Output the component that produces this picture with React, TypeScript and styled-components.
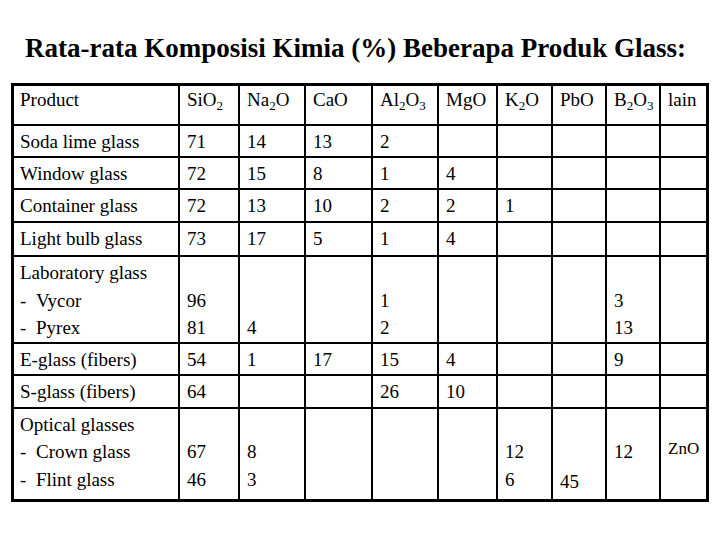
import React from 'react';
import styled, { createGlobalStyle } from 'styled-components';

const GlobalStyle = createGlobalStyle`
  html, body {
    margin: 0;
    padding: 0;
    background: #ffffff;
  }
  body {
    font-family: "Liberation Serif", "Times New Roman", serif;
    color: #000000;
  }
`;

const Page = styled.div`
  width: 720px;
  height: 540px;
  padding: 0 11px;
  box-sizing: border-box;
`;

const Title = styled.h1`
  margin: 0;
  height: 83px;
  padding: 33px 0 0 14px;
  box-sizing: border-box;
  font-size: 27px;
  font-weight: bold;
  line-height: 31px;
  white-space: nowrap;
`;

const Table = styled.table`
  width: 698px;
  table-layout: fixed;
  border-collapse: separate;
  border-spacing: 0;
  border: 3px solid #000;
  font-size: 19px;
`;

const Col = styled.col<{ $w: number }>`
  width: ${(p) => p.$w}px;
`;

const Row = styled.tr<{ $h: number }>`
  height: ${(p) => p.$h}px;
`;

const Cell = styled.td<{ $head?: boolean }>`
  box-sizing: border-box;
  vertical-align: top;
  padding: ${(p) => (p.$head ? '0 4px 0 7px' : '2px 4px 0 7px')};
  border-right: 2px solid #000;
  border-bottom: 2px solid #000;
  line-height: 27.5px;
  white-space: nowrap;
  overflow: hidden;

  &:first-child {
    padding-left: 6px;
  }
  &:last-child {
    border-right: none;
  }
  tr:last-child > & {
    border-bottom: none;
  }
`;

const Line = styled.div<{ $shift?: number; $small?: boolean }>`
  height: 27.5px;
  position: relative;
  top: ${(p) => p.$shift || 0}px;
  font-size: ${(p) => (p.$small ? '17px' : 'inherit')};
`;

const Sub = styled.sub`
  font-size: 13px;
  line-height: 0;
  vertical-align: -4px;
`;

const Dash = styled.span`
  display: inline-block;
  width: 16px;
`;

type Entry = string | { text: string; shift?: number; small?: boolean };

const columns = [166, 60, 66, 67, 66, 59, 55, 54, 54, 45];

const heads: React.ReactNode[] = [
  'Product',
  <>SiO<Sub>2</Sub></>,
  <>Na<Sub>2</Sub>O</>,
  'CaO',
  <>Al<Sub>2</Sub>O<Sub>3</Sub></>,
  'MgO',
  <>K<Sub>2</Sub>O</>,
  'PbO',
  <>B<Sub>2</Sub>O<Sub>3</Sub></>,
  'lain',
];

const rows: { h: number; cells: Entry[][] }[] = [
  { h: 32, cells: [['Soda lime glass'], ['71'], ['14'], ['13'], ['2'], [], [], [], [], []] },
  { h: 32, cells: [['Window glass'], ['72'], ['15'], ['8'], ['1'], ['4'], [], [], [], []] },
  { h: 33, cells: [['Container glass'], ['72'], ['13'], ['10'], ['2'], ['2'], ['1'], [], [], []] },
  { h: 34, cells: [['Light bulb glass'], ['73'], ['17'], ['5'], ['1'], ['4'], [], [], [], []] },
  {
    h: 84,
    cells: [
      ['Laboratory glass', '- Vycor', '- Pyrex'],
      ['', '96', '81'],
      ['', '', '4'],
      [],
      ['', '1', '2'],
      [],
      [],
      [],
      ['', '3', '13'],
      [],
    ],
  },
  { h: 32, cells: [['E-glass (fibers)'], ['54'], ['1'], ['17'], ['15'], ['4'], [], [], ['9'], []] },
  { h: 33, cells: [['S-glass (fibers)'], ['64'], [], [], ['26'], ['10'], [], [], [], []] },
  {
    h: 90,
    cells: [
      ['Optical glasses', '- Crown glass', '- Flint glass'],
      ['', '67', '46'],
      ['', '8', '3'],
      [],
      [],
      [],
      ['', '12', '6'],
      ['', '', { text: '45', shift: 2 }],
      ['', '12'],
      ['', { text: 'ZnO', shift: -3, small: true }],
    ],
  },
];

const renderText = (text: string) =>
  text.startsWith('- ') ? (
    <>
      <Dash>-</Dash>
      {text.slice(2)}
    </>
  ) : (
    text
  );

const App: React.FC = () => {
  return (
    <Page>
      <GlobalStyle />
      <Title>Rata-rata Komposisi Kimia (%) Beberapa Produk Glass:</Title>
      <Table>
        <colgroup>
          {columns.map((w, i) => (
            <Col key={i} $w={w} />
          ))}
        </colgroup>
        <tbody>
          <Row $h={40}>
            {heads.map((h, i) => (
              <Cell key={i} $head>
                {h}
              </Cell>
            ))}
          </Row>
          {rows.map((row, r) => (
            <Row key={r} $h={row.h}>
              {row.cells.map((lines, c) => (
                <Cell key={c}>
                  {lines.map((entry, l) =>
                    typeof entry === 'string' ? (
                      <Line key={l}>{renderText(entry)}</Line>
                    ) : (
                      <Line key={l} $shift={entry.shift} $small={entry.small}>
                        {entry.text}
                      </Line>
                    )
                  )}
                </Cell>
              ))}
            </Row>
          ))}
        </tbody>
      </Table>
    </Page>
  );
};

export default App;
